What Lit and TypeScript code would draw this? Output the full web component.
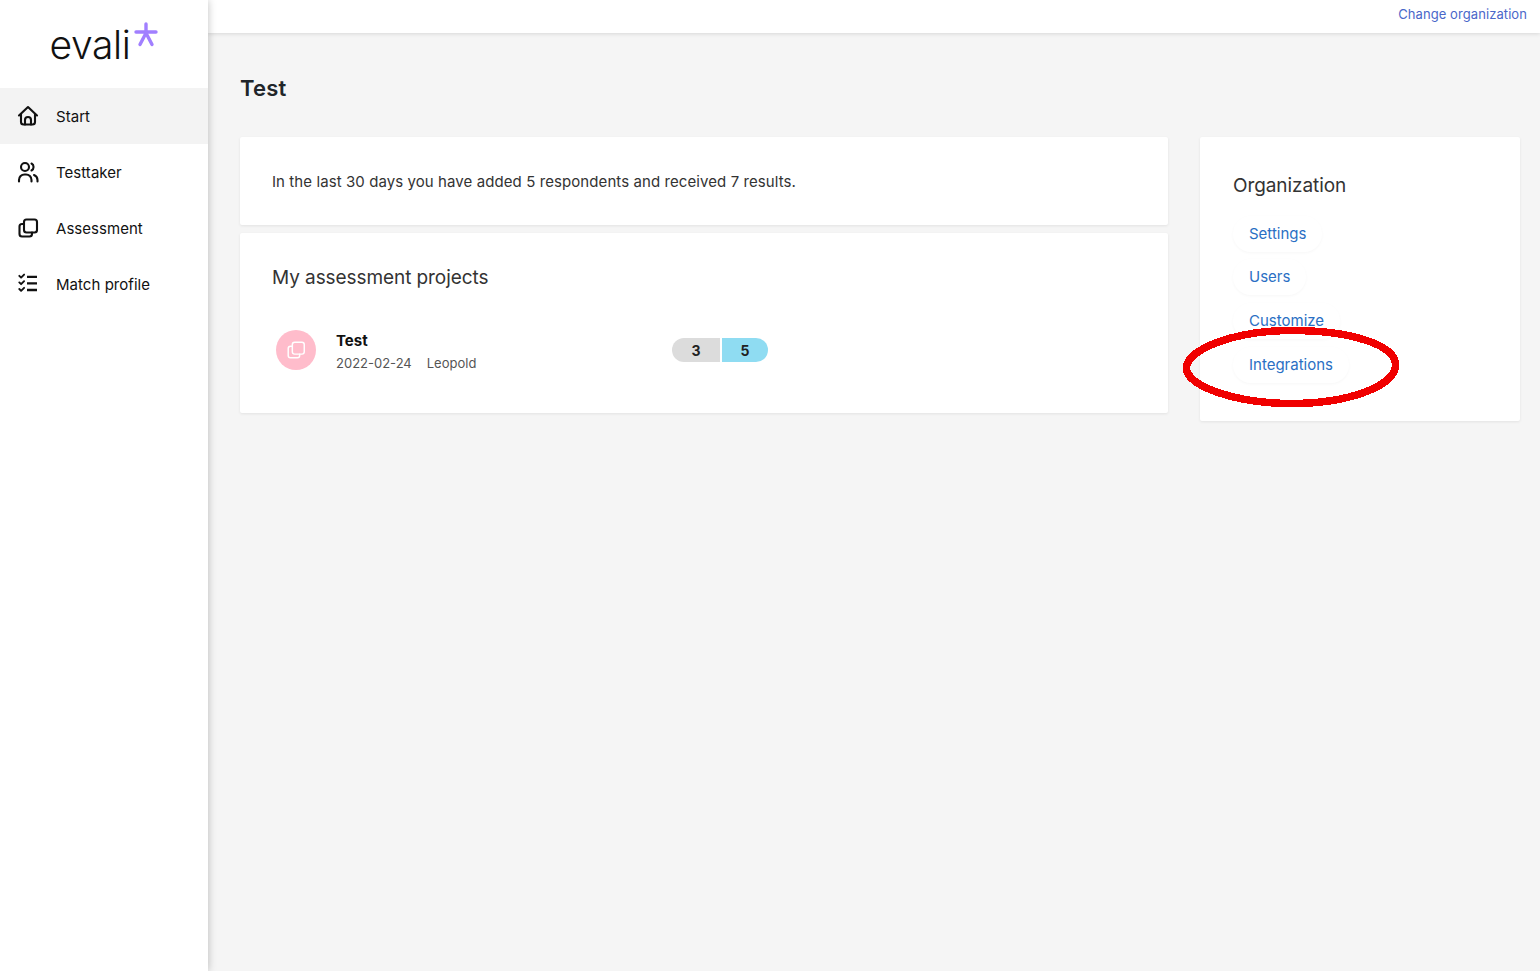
import { LitElement, html, css, svg } from "lit";
import { customElement } from "lit/decorators.js";

const icons: Record<string, unknown> = {
  home: svg`<path d="M3 11.500 12 3l9 8.500"/><path d="M5 10v8a2.500 2.500 0 0 0 2.500 2.500h9A2.500 2.500 0 0 0 19 18v-8"/><path d="M9 20.500V16a3 3 0 0 1 6 0v4.500"/>`,
  users: svg`<circle cx="9" cy="7" r="4"/><path d="M3 21.500V20a5.500 5.500 0 0 1 5.500-5.500h1.500a5.500 5.500 0 0 1 5.500 5.500v1.500"/><path d="M15.500 3.500a4 4 0 0 1 0 7"/><path d="M21.500 21.500V20a5.500 5.500 0 0 0-3.500-5"/>`,
  copy: svg`<rect x="8" y="3.500" width="13" height="13" rx="2.500"/><path d="M16 16.500V18a2.500 2.500 0 0 1-2.500 2.500H6A2.500 2.500 0 0 1 3.500 18v-7.500A2.500 2.500 0 0 1 6 8h2"/>`,
  list: svg`<path d="M11 4.800h10M11 11.400h10M11 18h10" stroke-width="2.300" stroke-linecap="butt"/><path d="m3.300 3.800 1.800 1.800 3-3M3.300 10.400l1.800 1.800 3-3M3.300 17l1.800 1.800 3-3" stroke-width="1.900"/>`,
};

const icon = (name: string) =>
  html`<svg class="icon" viewBox="0 0 24 24" fill="none" stroke="currentColor" stroke-width="2.100" stroke-linecap="round" stroke-linejoin="round">${icons[name]}</svg>`;

@customElement("app-root")
export class AppRoot extends LitElement {
  static styles = css`
    :host { display: block; height: 971px; overflow: hidden; position: relative; background: #f5f5f5; font-family: "Inter", "Liberation Sans", sans-serif; color: #212529; }
    * { box-sizing: border-box; }
    .shell { display: flex; height: 971px; }
    .side { width: 208px; flex: none; background: #fff; box-shadow: 0 0 8px rgba(0,0,0,.25); z-index: 2; }
    .logo { height: 88px; display: flex; justify-content: center; padding: 22px 0 0 0; }
    .logo-word { font: 300 39px/46px "Inter", "Liberation Sans", sans-serif; letter-spacing: -.4px; color: #111; }
    .logo-star { width: 24px; height: 25px; margin: 0 0 0 4px; color: #a17fff; }
    .nav-item { height: 56px; display: flex; align-items: center; gap: 16px; padding-left: 16px; font-size: 15px; letter-spacing: .04px; color: #111; }
    .nav-item.active { background: #f3f3f3; }
    .icon { width: 24px; height: 24px; flex: none; }
    .main { flex: 1; min-width: 0; }
    .top { height: 33px; background: #fff; box-shadow: 0 1px 4px rgba(0,0,0,.12); display: flex; justify-content: flex-end; padding: 6px 13px 0 0; font-size: 13px; letter-spacing: .08px; color: #4a67c9; }
    .content { padding: 0 20px 0 32px; }
    h1 { margin: 0; padding-top: 41px; height: 104px; font-size: 22px; line-height: 28px; font-weight: 600; letter-spacing: .2px; color: #212529; }
    .cols { display: flex; gap: 32px; align-items: flex-start; }
    .left { width: 928px; display: flex; flex-direction: column; gap: 8px; }
    .card { background: #fff; border-radius: 2px; box-shadow: 0 1px 3px rgba(0,0,0,.08); }
    .intro { height: 88px; padding: 0 32px; display: flex; align-items: center; font-size: 15px; letter-spacing: .085px; color: #333; }
    .projects { height: 180px; padding: 33px 32px 0; }
    h2 { margin: 0; font-size: 19px; line-height: 24px; font-weight: 400; letter-spacing: -.08px; color: #333; }
    .project { display: flex; align-items: center; margin: 37px 0 0 4px; }
    .avatar { width: 40px; height: 40px; border-radius: 50%; background: #ffbccb; color: #fff; display: flex; align-items: center; justify-content: center; margin-right: 20px; }
    .avatar .icon { width: 22px; height: 22px; stroke-width: 1.6; }
    .info { width: 336px; padding-top: 4px; }
    .name { font-size: 15px; line-height: 20px; font-weight: 700; color: #111; }
    .meta { display: flex; gap: 15px; font-size: 13px; line-height: 20px; margin-top: 2px; color: #555; }
    .bar { display: flex; gap: 2px; font-size: 14px; font-weight: 700; line-height: 25px; text-align: center; }
    .bar span { height: 24px; color: #222; }
    .bar .grey { width: 48px; background: #dcdcdc; border-radius: 12px 0 0 12px; }
    .bar .blue { width: 46px; background: #8fdcf2; border-radius: 0 12px 12px 0; }
    .org { width: 320px; height: 284px; padding: 36px 16px 0 33px; }
    .org h2 { margin: 0 0 18px; padding-top: 1px; height: 25px; }
    .links { display: flex; flex-direction: column; align-items: flex-start; gap: 8px; }
    .links a { display: block; height: 36px; padding: 0 16px; border-radius: 18px; font-size: 15px; line-height: 36px; color: #2a6fc4; box-shadow: 0 1px 3px rgba(0,0,0,.035); }
    .links a:first-child { margin-bottom: -1px; }
    .ring { position: absolute; left: 1180px; top: 324px; width: 222px; height: 86px; pointer-events: none; z-index: 3; }
  `;

  render() {
    const nav = [
      ["home", "Start"],
      ["users", "Testtaker"],
      ["copy", "Assessment"],
      ["list", "Match profile"],
    ];
    return html`
      <div class="shell">
        <aside class="side">
          <div class="logo">
            <span class="logo-word">evali</span>
            <svg class="logo-star" viewBox="0 0 24 25" fill="none" stroke="currentColor" stroke-width="3.400" stroke-linecap="round">
              <path d="M12 2v10M2 10h20M12 11 6 22.500M12 11l6 11.500"/>
            </svg>
          </div>
          ${nav.map(([i, t], n) => html`<div class="nav-item ${n === 0 ? "active" : ""}">${icon(i)}<span>${t}</span></div>`)}
        </aside>
        <main class="main">
          <div class="top">Change organization</div>
          <div class="content">
            <h1>Test</h1>
            <div class="cols">
              <div class="left">
                <section class="card intro">In the last 30 days you have added 5 respondents and received 7 results.</section>
                <section class="card projects">
                  <h2>My assessment projects</h2>
                  <div class="project">
                    <div class="avatar">${icon("copy")}</div>
                    <div class="info">
                      <div class="name">Test</div>
                      <div class="meta"><span>2022-02-24</span><span>Leopold</span></div>
                    </div>
                    <div class="bar"><span class="grey">3</span><span class="blue">5</span></div>
                  </div>
                </section>
              </div>
              <section class="card org">
                <h2>Organization</h2>
                <div class="links">
                  <a>Settings</a><a>Users</a><a>Customize</a><a>Integrations</a>
                </div>
              </section>
            </div>
          </div>
        </main>
      </div>
      <svg class="ring" viewBox="0 0 222 86" fill="none" stroke="#f00000" stroke-width="7.500" shape-rendering="crispEdges">
        <path d="M6.500 43C8 26 52 6.500 112 6.500c56 0 103.500 13.500 103.500 34.500S168 79.500 112 79.500C56 79.500 5 62 6.500 43Z"/>
      </svg>
    `;
  }
}
